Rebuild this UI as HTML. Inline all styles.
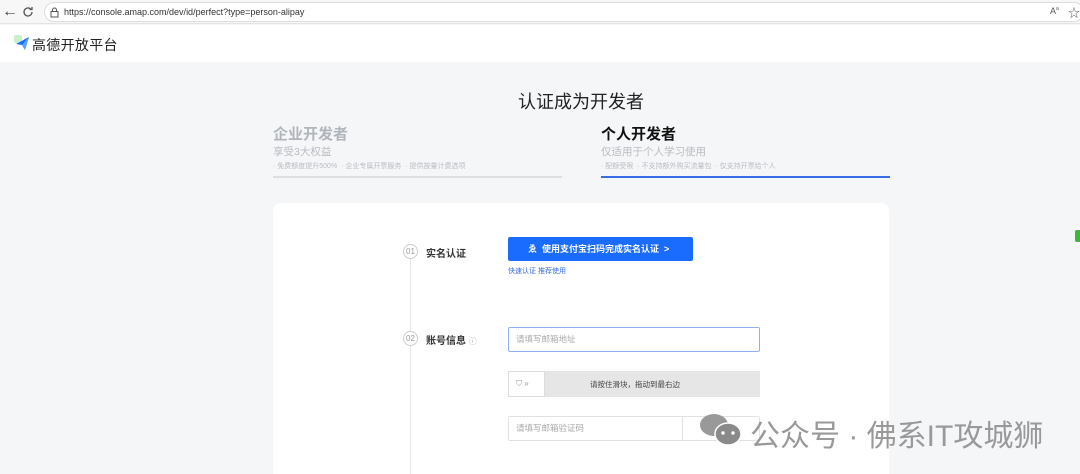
<!DOCTYPE html>
<html><head><meta charset="utf-8"><style>
*{margin:0;padding:0;box-sizing:border-box}
html,body{width:1080px;height:474px;overflow:hidden}
body{background:#f5f6f8;font-family:"Liberation Sans","Noto Sans CJK SC",sans-serif;position:relative}
.a{position:absolute}
</style></head><body>
<div class="a" style="left:0;top:0;width:1080px;height:24px;background:#f7f7f7;border-bottom:1px solid #e4e4e4"></div>
<div class="a" style="left:2px;top:3px;font-size:16px;color:#444">←</div>
<svg class="a" style="left:22px;top:6px" width="12" height="12" viewBox="0 0 12 12"><path d="M10 6a4 4 0 1 1-1.2-2.9M10 1v2.5H7.5" fill="none" stroke="#555" stroke-width="1.3"/></svg>
<div class="a" style="left:44px;top:2px;width:1040px;height:20px;background:#fff;border:1px solid #ddd;border-radius:10px"></div>
<svg class="a" style="left:50px;top:7px" width="9" height="11" viewBox="0 0 9 11"><rect x="1" y="4.5" width="7" height="5.5" fill="none" stroke="#555"/><path d="M2.5 4.5V3a2 2 0 0 1 4 0v1.5" fill="none" stroke="#555"/></svg>
<div class="a" style="left:64px;top:7px;font-size:9px;color:#333">https://console.amap.com/dev/id/perfect?type=person-alipay</div>
<div class="a" style="left:1050px;top:6px;font-size:9px;color:#555">A<sup style="font-size:5px">a</sup></div>
<div class="a" style="left:1068px;top:4px;font-size:12px;color:#555">☆</div>
<div class="a" style="left:0;top:25px;width:1080px;height:37px;background:#fff"></div>
<svg class="a" style="left:14px;top:35px" width="16" height="16" viewBox="0 0 16 16"><rect x="0" y="0" width="8" height="8" rx="2" fill="#c9f0c9"/><path d="M2 9L15 2 11 15 8 10z" fill="#1a6cff"/><path d="M8 10L15 2 11 15z" fill="#59a6ff"/></svg>
<div class="a" style="left:32px;top:35px;font-size:14px;color:#222;letter-spacing:0.3px">高德开放平台</div>
<div class="a" style="left:0;top:88px;width:1162px;text-align:center;font-size:18px;color:#222">认证成为开发者</div>
<div class="a" style="left:273px;top:123px;font-size:15px;color:#b0b4bb;font-weight:bold">企业开发者</div>
<div class="a" style="left:273px;top:144px;font-size:10.5px;color:#b8bcc2">享受3大权益</div>
<div class="a" style="left:273px;top:161px;font-size:7px;color:#b8bcc2">· 免费额度提升500% &nbsp;· 企业专属开票服务 &nbsp;· 提供按量计费选项</div>
<div class="a" style="left:273px;top:176px;width:289px;height:2px;background:#dcdee2"></div>
<div class="a" style="left:601px;top:123px;font-size:15px;color:#111;font-weight:bold">个人开发者</div>
<div class="a" style="left:601px;top:144px;font-size:10.5px;color:#b8bcc2">仅适用于个人学习使用</div>
<div class="a" style="left:601px;top:161px;font-size:7px;color:#b8bcc2">· 配额受限 &nbsp;· 不支持额外购买流量包 &nbsp;· 仅支持开票给个人</div>
<div class="a" style="left:601px;top:176px;width:289px;height:2px;background:#3a6ee8"></div>
<div class="a" style="left:273px;top:203px;width:616px;height:271px;background:#fff;border-radius:8px 8px 0 0"></div>
<div class="a" style="left:410px;top:258px;width:1px;height:216px;background:#e6e6e6"></div>
<div class="a" style="left:403px;top:244px;width:15px;height:15px;border:1px solid #ccc;border-radius:50%;background:#fff;font-size:8px;color:#999;text-align:center;line-height:13px">01</div>
<div class="a" style="left:426px;top:245px;font-size:10px;color:#333;font-weight:bold">实名认证</div>
<div class="a" style="left:403px;top:331px;width:15px;height:15px;border:1px solid #ccc;border-radius:50%;background:#fff;font-size:8px;color:#999;text-align:center;line-height:13px">02</div>
<div class="a" style="left:426px;top:332px;font-size:10px;color:#333;font-weight:bold">账号信息 <span style="font-weight:normal;color:#aaa;font-size:8px">ⓘ</span></div>
<div class="a" style="left:508px;top:237px;width:185px;height:24px;background:#1a6cff;border-radius:2px;color:#fff;font-size:9px;font-weight:bold;line-height:24px;padding-left:20px">ゑ&nbsp; 使用支付宝扫码完成实名认证 &nbsp;&gt;</div>
<div class="a" style="left:508px;top:266px;font-size:7px;color:#3a6ee8">快速认证 推荐使用</div>
<div class="a" style="left:508px;top:327px;width:252px;height:25px;border:1px solid #8fb0f5;border-radius:2px;font-size:8.5px;color:#aaa;line-height:23px;padding-left:7px">请填写邮箱地址</div>
<div class="a" style="left:508px;top:371px;width:252px;height:26px;background:#e6e6e6"></div>
<div class="a" style="left:508px;top:371px;width:37px;height:26px;background:#fff;border:1px solid #ddd;font-size:8px;color:#999;line-height:24px;padding-left:7px">⛉ »</div>
<div class="a" style="left:590px;top:379px;font-size:7.5px;color:#444">请按住滑块，拖动到最右边</div>
<div class="a" style="left:508px;top:416px;width:252px;height:25px;border:1px solid #e2e2e2;border-radius:2px;font-size:8.5px;color:#aaa;line-height:23px;padding-left:7px">请填写邮箱验证码</div>
<div class="a" style="left:682px;top:416px;width:1px;height:25px;background:#e2e2e2"></div>
<svg class="a" style="left:698px;top:412px" width="46" height="36" viewBox="0 0 46 36"><ellipse cx="16" cy="13" rx="14" ry="11" fill="#999"/><ellipse cx="30" cy="22" rx="13" ry="11" fill="#8a8a8a" stroke="#fff" stroke-width="1.5"/><circle cx="25" cy="21" r="1.7" fill="#fff"/><circle cx="35" cy="21" r="1.7" fill="#fff"/></svg>
<div class="a" style="left:750px;top:411px;font-size:30px;color:#999;white-space:nowrap">公众号 · 佛系IT攻城狮</div>
<div class="a" style="left:1075px;top:230px;width:8px;height:12px;background:#3db83d;border-radius:2px"></div>
</body></html>
